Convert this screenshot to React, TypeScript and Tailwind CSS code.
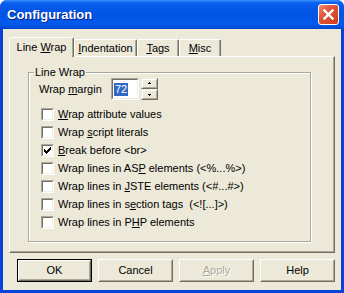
import React from "react";

function U({ children }: { children: React.ReactNode }) {
  return <span className="underline decoration-1 underline-offset-[1px]">{children}</span>;
}

function Check() {
  const cols = [2, 3, 4, 3, 2, 1, 0];
  return (
    <svg width="7" height="7" viewBox="0 0 7 7" shapeRendering="crispEdges">
      {cols.map((y, x) => (
        <rect key={x} x={x} y={y} width="1" height="3" fill="#000" />
      ))}
    </svg>
  );
}

function CheckBox({ checked, children }: { checked?: boolean; children: React.ReactNode }) {
  return (
    <div className="flex h-[18px] items-center gap-[4px]">
      <div className="h-[13px] w-[13px] border border-t-[#ACA899] border-l-[#ACA899] border-r-white border-b-white">
        <div className="flex h-full w-full items-center justify-center border border-t-[#716F64] border-l-[#716F64] border-r-[#F1EFE2] border-b-[#F1EFE2] bg-white">
          {checked && <Check />}
        </div>
      </div>
      <span className="text-black">{children}</span>
    </div>
  );
}

function SpinButton({ up }: { up?: boolean }) {
  return (
    <div className="h-[11px] w-[17px] border border-t-[#F1EFE2] border-l-[#F1EFE2] border-r-[#716F64] border-b-[#716F64] bg-[#ECE9D8]">
      <div className="flex h-full w-full items-center justify-center border border-t-white border-l-white border-r-[#ACA899] border-b-[#ACA899]">
        <svg width="5" height="3" viewBox="0 0 5 3" shapeRendering="crispEdges">
          {up ? (
            <>
              <rect x="2" y="0" width="1" height="1" fill="#000" />
              <rect x="1" y="1" width="3" height="1" fill="#000" />
            </>
          ) : (
            <>
              <rect x="1" y="1" width="3" height="1" fill="#000" />
              <rect x="2" y="2" width="1" height="1" fill="#000" />
            </>
          )}
        </svg>
      </div>
    </div>
  );
}

function Button({ children, isDefault, disabled }: { children: React.ReactNode; isDefault?: boolean; disabled?: boolean }) {
  const inner = (
    <div className="flex h-full w-full border border-t-white border-l-white border-r-[#716F64] border-b-[#716F64]">
      <div
        className={
          "flex h-full w-full items-center justify-center border border-t-[#ECE9D8] border-l-[#ECE9D8] border-r-[#ACA899] border-b-[#ACA899] " +
          (disabled ? "text-[#ACA899] [text-shadow:1px_1px_0_#fff]" : "text-black")
        }
      >
        {children}
      </div>
    </div>
  );
  return (
    <div className={"h-[23px] w-[75px] " + (isDefault ? "border border-black" : "")}>
      {inner}
    </div>
  );
}

function Tab({ children, active, width }: { children: React.ReactNode; active?: boolean; width: string }) {
  return (
    <div
      className={
        "flex items-center justify-center rounded-t-[2px] border-t border-l border-r border-t-white border-l-white border-r-[#716F64] bg-[#ECE9D8] shadow-[inset_-1px_0_#ACA899] " +
        width +
        (active ? " relative z-10 -mb-[1px] h-[20px] pb-[1px]" : " h-[17px]")
      }
    >
      {children}
    </div>
  );
}

export default function App() {
  return (
    <div className="flex h-[293px] w-[344px] flex-col overflow-hidden rounded-t-[7px] bg-[#0843D8] font-['Tahoma','Liberation_Sans',sans-serif] text-[11px] leading-[13px]">
      {/* Title bar */}
      <div className="flex h-[29px] shrink-0 items-center justify-between bg-[linear-gradient(to_bottom,#3d93fb_0%,#0a5eef_10%,#0055e5_45%,#0359ea_85%,#0046d2_100%)] pl-[7px] pr-[5px]">
        <span className="font-['Liberation_Sans',sans-serif] text-[13px] leading-[16px] font-bold text-white [text-shadow:1px_1px_0_#0a1e8c]">
          Configuration
        </span>
        <div className="flex h-[21px] w-[21px] items-center justify-center rounded-[3px] border border-white bg-[linear-gradient(135deg,#f0916e_0%,#e2593b_35%,#cc3a1a_100%)]">
          <svg width="11" height="11" viewBox="0 0 11 11">
            <path d="M1.5 1.5 L9.5 9.5 M9.5 1.5 L1.5 9.5" stroke="#fff" strokeWidth="2.4" strokeLinecap="square" />
          </svg>
        </div>
      </div>

      {/* Dialog body */}
      <div className="mx-[3px] mb-[3px] flex flex-1 flex-col bg-[#ECE9D8] pt-[8px] text-black">
        {/* Tab strip */}
        <div className="ml-[6px] flex h-[19px] items-end">
          <Tab active width="w-[65px]">
            <span>
              Line <U>W</U>rap
            </span>
          </Tab>
          <Tab width="w-[63px]">
            <span>
              <U>I</U>ndentation
            </span>
          </Tab>
          <Tab width="w-[42px]">
            <span>
              <U>T</U>ags
            </span>
          </Tab>
          <Tab width="w-[42px]">
            <span>
              <U>M</U>isc
            </span>
          </Tab>
        </div>

        {/* Tab panel */}
        <div className="ml-[6px] h-[197px] w-[326px] border border-t-white border-l-white border-r-[#716F64] border-b-[#716F64] shadow-[inset_-1px_-1px_#ACA899]">
          <fieldset className="ml-[18px] mt-[9px] w-[283px] border border-[#ACA899] pb-[10px] pl-[10px] shadow-[inset_1px_1px_0_#fff,1px_1px_0_#fff]">
            <legend className="-ml-[5px] bg-[#ECE9D8] px-[1px]">Line Wrap</legend>
            <div className="-mt-[1px] flex h-[22px] items-center">
              <span className="w-[72px]">
                Wrap <U>m</U>argin
              </span>
              <div className="flex h-[22px] w-[28px] items-center border border-t-[#ACA899] border-l-[#ACA899] border-r-white border-b-white">
                <div className="flex h-full w-full items-center border border-t-[#716F64] border-l-[#716F64] border-r-[#F1EFE2] border-b-[#F1EFE2] bg-white pl-[1px]">
                  <span className="bg-[#316AC5] px-[1px] text-white">72</span>
                </div>
              </div>
              <div className="ml-[2px] flex flex-col">
                <SpinButton up />
                <SpinButton />
              </div>
            </div>
            <div className="ml-[2px] mt-[5px] flex flex-col">
              <CheckBox>
                <U>W</U>rap attribute values
              </CheckBox>
              <CheckBox>
                Wrap <U>s</U>cript literals
              </CheckBox>
              <CheckBox checked>
                <U>B</U>reak before &lt;br&gt;
              </CheckBox>
              <CheckBox>
                Wrap lines in AS<U>P</U> elements (&lt;%...%&gt;)
              </CheckBox>
              <CheckBox>
                Wrap lines in <U>J</U>STE elements (&lt;#...#&gt;)
              </CheckBox>
              <CheckBox>
                Wrap lines in s<U>e</U>ction tags &nbsp;(&lt;![...]&gt;)
              </CheckBox>
              <CheckBox>
                Wrap lines in P<U>H</U>P elements
              </CheckBox>
            </div>
          </fieldset>
        </div>

        {/* Buttons */}
        <div className="ml-[14px] mt-[6px] flex gap-[6px]">
          <Button isDefault>OK</Button>
          <Button>Cancel</Button>
          <Button disabled>
            <span>
              <U>A</U>pply
            </span>
          </Button>
          <Button>Help</Button>
        </div>
      </div>
    </div>
  );
}
